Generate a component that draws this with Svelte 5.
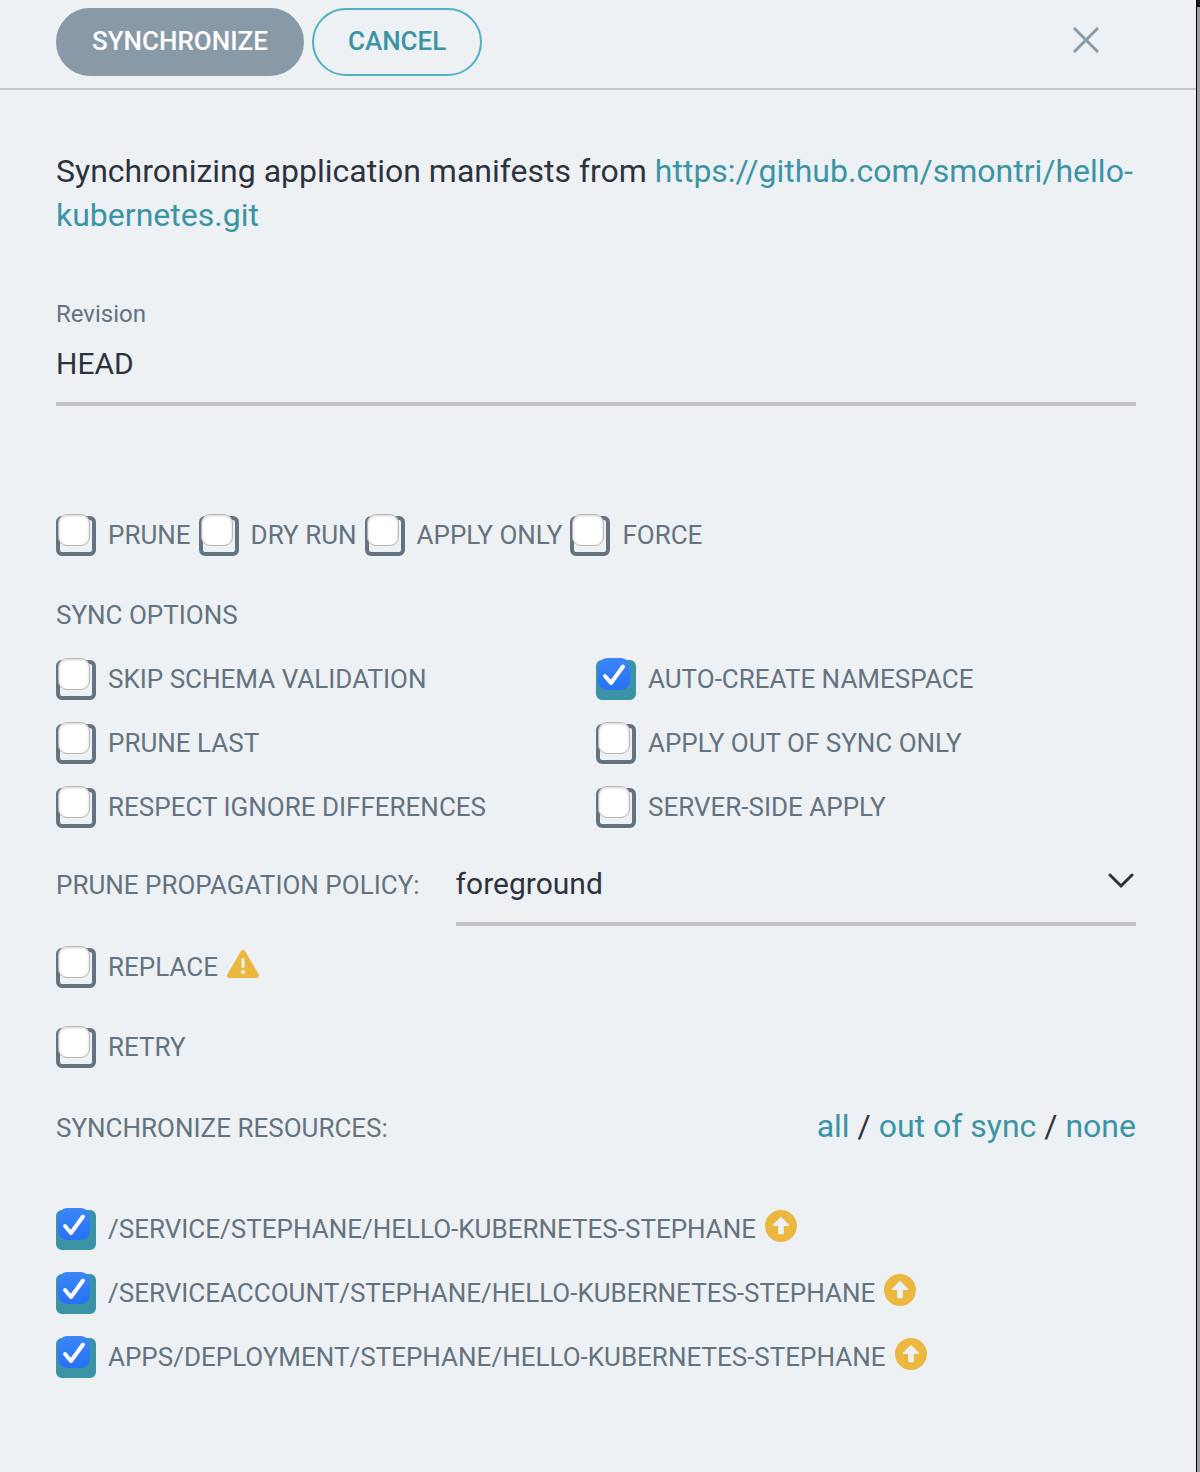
<script>
  let revision = $state('HEAD');
  let policy = $state('foreground');

  let actions = $state([
    { id: 'prune', label: 'Prune', checked: false },
    { id: 'dry-run', label: 'Dry run', checked: false },
    { id: 'apply-only', label: 'Apply only', checked: false },
    { id: 'force', label: 'Force', checked: false }
  ]);

  let options = $state([
    { id: 'skip-schema', label: 'Skip schema validation', checked: false },
    { id: 'auto-create', label: 'Auto-create namespace', checked: true },
    { id: 'prune-last', label: 'Prune last', checked: false },
    { id: 'out-of-sync', label: 'Apply out of sync only', checked: false },
    { id: 'ignore-diff', label: 'Respect ignore differences', checked: false },
    { id: 'server-side', label: 'Server-side apply', checked: false }
  ]);

  let replace = $state([{ id: 'replace', label: 'Replace', icon: 'warning', checked: false }]);
  let retry = $state([{ id: 'retry', label: 'Retry', checked: false }]);

  let resources = $state([
    { id: 'service', label: '/service/stephane/hello-kubernetes-stephane', icon: 'outdated', checked: true },
    { id: 'account', label: '/serviceaccount/stephane/hello-kubernetes-stephane', icon: 'outdated', checked: true },
    { id: 'deployment', label: 'apps/deployment/stephane/hello-kubernetes-stephane', icon: 'outdated', checked: true }
  ]);

  function selectAll(value) {
    for (const resource of resources) resource.checked = value;
  }
</script>

{#snippet checkbox(item)}
  <label class="check" for={item.id}>
    <span class="box" class:on={item.checked}>
      <input type="checkbox" id={item.id} bind:checked={item.checked} />
      {#if item.checked}
        <svg class="tick" viewBox="0 0 32 32" aria-hidden="true">
          <path d="M7 18 13 25 25 8.5" />
        </svg>
      {/if}
    </span>
    <span class="label">{item.label}</span>
    {#if item.icon === 'warning'}
      <svg class="icon" viewBox="0 0 512 512" aria-hidden="true">
        <path d="M256 32c14.2 0 27.3 7.5 34.5 19.8l216 368c7.3 12.4 7.3 27.7 .2 40.1S486.3 480 472 480L40 480c-14.3 0-27.6-7.7-34.7-20.1s-7-27.8 .2-40.1l216-368C228.7 39.5 241.8 32 256 32zm0 128c-13.3 0-24 10.7-24 24l0 112c0 13.3 10.7 24 24 24s24-10.7 24-24l0-112c0-13.3-10.7-24-24-24zm32 224a32 32 0 1 0 -64 0 32 32 0 1 0 64 0z" />
      </svg>
    {:else if item.icon === 'outdated'}
      <svg class="icon" viewBox="8 8 496 496" aria-hidden="true">
        <path d="M8 256C8 119 119 8 256 8s248 111 248 248-111 248-248 248S8 393 8 256zm292 116V256h70.9c10.7 0 16.1-13 8.5-20.5L264.5 121.2c-4.7-4.7-12.2-4.7-16.9 0l-115 114.3c-7.6 7.6-2.2 20.5 8.5 20.5H212v116c0 6.6 5.4 12 12 12h64c6.6 0 12-5.4 12-12z" />
      </svg>
    {/if}
  </label>
{/snippet}

<div class="backdrop">
  <div class="panel">
    <header>
      <button class="btn primary" type="button">Synchronize</button>
      <button class="btn" type="button">Cancel</button>
      <button class="close" type="button" aria-label="Close">
        <svg viewBox="0 0 28 28" aria-hidden="true"><path d="M2 2 26 26M26 2 2 26" /></svg>
      </button>
    </header>

    <main>
      <p class="intro">
        Synchronizing application manifests from
        <a href="https://github.com/smontri/hello-kubernetes.git">https://github.com/smontri/hello-kubernetes.git</a>
      </p>

      <div class="field">
        <label for="revision">Revision</label>
        <input id="revision" type="text" bind:value={revision} />
      </div>

      <div class="actions">
        {#each actions as item (item.id)}{@render checkbox(item)}{/each}
      </div>

      <h2>Sync options</h2>
      <div class="options">
        {#each options as item (item.id)}{@render checkbox(item)}{/each}
      </div>

      <div class="policy">
        <label for="policy">Prune propagation policy:</label>
        <div class="select">
          <select id="policy" bind:value={policy}>
            <option>foreground</option>
            <option>background</option>
            <option>orphan</option>
          </select>
          <svg viewBox="0 0 28 16" aria-hidden="true"><path d="M3 2 14 13 25 2" /></svg>
        </div>
      </div>

      <div class="single">{@render checkbox(replace[0])}</div>
      <div class="single">{@render checkbox(retry[0])}</div>

      <div class="resources-head">
        <h2>Synchronize resources:</h2>
        <div class="links">
          <a href="#all" onclick={() => selectAll(true)}>all</a> /
          <a href="#out-of-sync" onclick={() => selectAll(true)}>out of sync</a> /
          <a href="#none" onclick={() => selectAll(false)}>none</a>
        </div>
      </div>

      <div class="resources">
        {#each resources as item (item.id)}{@render checkbox(item)}{/each}
      </div>
    </main>
  </div>
</div>

<style>
  :global(body) {
    margin: 0;
    background: #edf1f4;
  }

  .backdrop {
    box-sizing: border-box;
    min-height: 100vh;
    padding-right: 3px;
    background: linear-gradient(#1c1b19 6px, #000 6px, #000 7px, #9d9fa1 7px);
    font-family: Roboto, 'Liberation Sans', sans-serif;
    font-size: 26px;
    line-height: 32px;
    color: #647380;
  }

  .panel {
    box-sizing: border-box;
    min-height: 100vh;
    border-right: 1px solid #000;
    background: #edf1f4;
  }

  header {
    display: flex;
    align-items: center;
    gap: 8px;
    padding: 8px 96px 12px 56px;
    border-bottom: 2px solid #c1c7cb;
  }

  button {
    font: inherit;
    cursor: pointer;
  }

  .btn {
    height: 68px;
    padding: 0 34px 2px;
    border: 2px solid #4fb0c6;
    border-radius: 34px;
    background: transparent;
    color: #3b94a5;
    font-weight: 500;
    text-transform: uppercase;
  }

  .primary {
    border-color: #8899a8;
    background: #8899a8;
    color: #fff;
  }

  .close {
    display: flex;
    margin-left: auto;
    padding: 0 0 4px;
    border: 0;
    background: none;
  }

  .close svg {
    width: 28px;
    height: 28px;
    fill: none;
    stroke: #8899a8;
    stroke-width: 3;
  }

  main {
    padding: 59px 60px 80px 56px;
  }

  a {
    color: #3b94a5;
    text-decoration: none;
  }

  .intro {
    margin: 0;
    font-size: 32px;
    line-height: 44px;
    color: #2d333d;
  }

  .field {
    display: flex;
    flex-direction: column;
    padding-top: 61px;
  }

  .field label {
    font-size: 24px;
    line-height: 32px;
  }

  .field input,
  select {
    box-sizing: border-box;
    width: 100%;
    margin: 0;
    padding: 0;
    border: 0;
    border-bottom: 4px solid #c1c3c5;
    border-radius: 0;
    outline: 0;
    background: transparent;
    font: inherit;
    font-size: 30px;
    color: #2d333d;
  }

  .field input {
    height: 76px;
    padding-bottom: 6px;
  }

  .check {
    display: flex;
    align-items: center;
    height: 40px;
    text-transform: uppercase;
    white-space: nowrap;
  }

  .box {
    position: relative;
    box-sizing: border-box;
    flex: none;
    width: 40px;
    height: 40px;
    margin-right: 12px;
    border: 4px solid #647380;
    border-radius: 6px;
  }

  .box.on {
    border-color: #3b94a5;
    background: #3b94a5;
  }

  .box input {
    position: absolute;
    top: -6px;
    left: -2px;
    box-sizing: border-box;
    width: 32px;
    height: 32px;
    margin: 0;
    appearance: none;
    border: 1px solid #b8b8b8;
    border-radius: 9px;
    background: #fff;
    box-shadow: inset 0 1px 3px #d4d4d4;
  }

  .box input:checked {
    border: 0;
    background: linear-gradient(#3b86f8, #2870f5);
    box-shadow: none;
  }

  .tick {
    position: absolute;
    top: -6px;
    left: -2px;
    width: 32px;
    height: 32px;
    fill: none;
    stroke: #fff;
    stroke-width: 4;
    stroke-linecap: round;
    stroke-linejoin: round;
    pointer-events: none;
  }

  .label {
    padding-bottom: 2px;
  }

  .icon {
    flex: none;
    width: 32px;
    height: 32px;
    margin: 0 0 8px 9px;
    fill: #ebb73f;
  }

  .actions {
    display: flex;
    flex-wrap: wrap;
    gap: 24px 8px;
    padding-top: 110px;
  }

  h2 {
    margin: 0;
    font-size: 26px;
    font-weight: 400;
    line-height: 32px;
    text-transform: uppercase;
  }

  .actions + h2 {
    padding: 43px 0 29px;
  }

  .options {
    display: grid;
    grid-template-columns: 1fr 1fr;
    gap: 24px 0;
  }

  .policy {
    display: flex;
    align-items: center;
    justify-content: space-between;
    padding: 14px 0 22px;
  }

  .policy label {
    padding-top: 1px;
    text-transform: uppercase;
  }

  .select {
    position: relative;
    width: 63%;
  }

  select {
    display: block;
    height: 84px;
    padding-top: 4px;
    appearance: none;
  }

  .select svg {
    position: absolute;
    top: 31px;
    right: 1px;
    width: 28px;
    height: 16px;
    fill: none;
    stroke: #2d333d;
    stroke-width: 3;
    stroke-linecap: round;
    pointer-events: none;
  }

  .single {
    padding-bottom: 40px;
  }

  .resources-head {
    display: flex;
    align-items: center;
    justify-content: space-between;
  }

  .resources-head h2 {
    padding-top: 2px;
  }

  .links {
    padding-bottom: 2px;
    font-size: 32px;
    line-height: 36px;
    color: #2d333d;
  }

  .resources {
    display: flex;
    flex-direction: column;
    gap: 24px;
    padding-top: 64px;
  }
</style>
